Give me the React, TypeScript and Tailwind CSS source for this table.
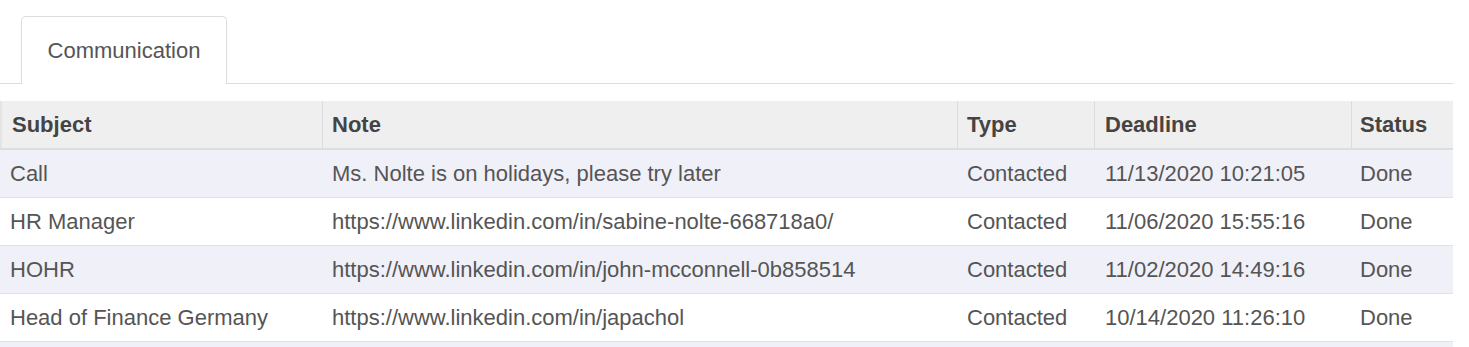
import React from "react";

const rows = [
  ["Call", "Ms. Nolte is on holidays, please try later", "Contacted", "11/13/2020 10:21:05", "Done"],
  ["HR Manager", "https://www.linkedin.com/in/sabine-nolte-668718a0/", "Contacted", "11/06/2020 15:55:16", "Done"],
  ["HOHR", "https://www.linkedin.com/in/john-mcconnell-0b858514", "Contacted", "11/02/2020 14:49:16", "Done"],
  ["Head of Finance Germany", "https://www.linkedin.com/in/japachol", "Contacted", "10/14/2020 11:26:10", "Done"],
];

const widths = ["w-[323px]", "w-[635px]", "w-[137px]", "w-[257px]", "w-[101px]"];
const pads = ["pl-[10px]", "pl-[9px]", "pl-[9px]", "pl-[10px]", "pl-[8px]"];

export default function App() {
  return (
    <div className="bg-white w-[1469px] h-[347px] overflow-hidden pt-[16px] text-[22px] text-[#555]" style={{ fontFamily: '"Liberation Sans", Arial, sans-serif' }}>
      <div className="flex w-[1453px] border-b border-[#dddddd] h-[68px]">
        <div className="ml-[21px] w-[206px] h-[68px] -mb-px bg-white border border-b-0 border-[#dddddd] rounded-t-[5px] flex items-center justify-center text-[#555]">
          Communication
        </div>
      </div>
      <div className="mt-[17px] w-[1453px]">
        <div className="flex h-[49px] bg-[#efefef] border-b-2 border-[#dddddd] font-bold text-[#444]">
          {["Subject", "Note", "Type", "Deadline", "Status"].map((h, i) => (
            <div
              key={h}
              className={`${widths[i]} ${pads[i]} flex items-center shrink-0 ${i === 0 ? "border-l-2 border-[#e4e4e4]" : ""} ${i < 4 ? "border-r border-r-[#dddddd]" : ""}`}
            >
              {h}
            </div>
          ))}
        </div>
        {rows.map((r, ri) => (
          <div key={ri} className={`flex h-[48px] border-b border-[#e2e2e2] ${ri % 2 === 0 ? "bg-[#f0f0f8]" : "bg-white"}`}>
            {r.map((c, i) => (
              <div key={i} className={`${widths[i]} ${pads[i]} flex items-center shrink-0 whitespace-nowrap`}>
                {c}
              </div>
            ))}
          </div>
        ))}
        <div className="h-[48px] bg-[#f0f0f8]" />
      </div>
    </div>
  );
}
